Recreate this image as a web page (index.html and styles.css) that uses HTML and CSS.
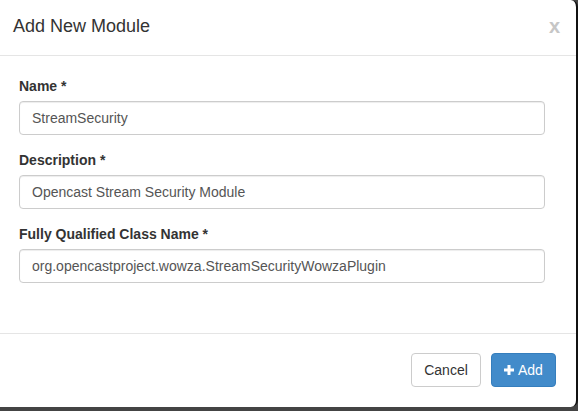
FILE: index.html
```html
<!DOCTYPE html>
<html>
<head>
<meta charset="utf-8">
<link rel="stylesheet" href="styles.css">
</head>
<body>
<div class="modal">
  <div class="modal-header">
    <h4 class="modal-title">Add New Module</h4>
    <span class="close">x</span>
  </div>
  <div class="modal-body">
    <div class="form-group">
      <label class="label">Name *</label>
      <input class="input" type="text" value="StreamSecurity">
    </div>
    <div class="form-group">
      <label class="label">Description *</label>
      <input class="input" type="text" value="Opencast Stream Security Module">
    </div>
    <div class="form-group">
      <label class="label">Fully Qualified Class Name *</label>
      <input class="input" type="text" value="org.opencastproject.wowza.StreamSecurityWowzaPlugin">
    </div>
  </div>
  <div class="modal-footer">
    <button class="btn btn-default">Cancel</button>
    <button class="btn btn-primary"><svg class="plus" width="10" height="10" viewBox="0 0 10 10"><rect x="3.5" y="0" width="3" height="10" fill="#fff"/><rect x="0" y="3.5" width="10" height="3" fill="#fff"/></svg>Add</button>
  </div>
</div>
</body>
</html>
```
FILE: styles.css
```css
* { box-sizing: border-box; }
html, body { margin: 0; padding: 0; }
body {
  width: 578px;
  height: 411px;
  background: #444;
  font-family: "Liberation Sans", Arial, sans-serif;
  font-size: 14px;
  line-height: 20px;
  color: #333;
  overflow: hidden;
}
.modal {
  width: 578px;
  height: 407px;
  background: #fff;
  border-right: 2px solid #111;
  border-radius: 0 7px 7px 0;
  display: flex;
  flex-direction: column;
}
.modal-header {
  height: 56px;
  padding: 13px 15px 0 13px;
  border-bottom: 1px solid #e5e5e5;
  display: flex;
  justify-content: space-between;
  align-items: flex-start;
}
.modal-title {
  margin: 0;
  font-size: 18px;
  font-weight: normal;
  line-height: 26px;
  color: #333;
}
.close {
  font-size: 20px;
  font-weight: bold;
  color: #c6c6c6;
  line-height: 26px;
  margin-right: 1px;
}
.modal-body {
  padding: 20px 31px 0 19px;
  height: 278px;
  border-bottom: 1px solid #e5e5e5;
}
.form-group {
  margin-bottom: 15px;
  display: flex;
  flex-direction: column;
}
.label {
  font-weight: bold;
  margin-bottom: 5px;
  line-height: 20px;
}
.input {
  width: 526px;
  height: 34px;
  padding: 6px 12px;
  border: 1px solid #ccc;
  border-radius: 4px;
  font-family: "Liberation Sans", Arial, sans-serif;
  font-size: 14px;
  color: #555;
  box-shadow: inset 0 1px 1px rgba(0,0,0,.075);
  outline: none;
}
.modal-footer {
  display: flex;
  justify-content: flex-end;
  gap: 10px;
  padding: 19px 20px 0 0;
}
.btn {
  height: 34px;
  padding: 6px 12px;
  border-radius: 4px;
  font-family: "Liberation Sans", Arial, sans-serif;
  font-size: 14px;
  line-height: 20px;
  display: flex;
  align-items: center;
}
.btn-default {
  background: #fff;
  border: 1px solid #ccc;
  color: #333;
  width: 70px;
  justify-content: center;
}
.btn-primary {
  background: #428bca;
  border: 1px solid #357ebd;
  color: #fff;
  width: 65px;
  padding: 6px 0 6px 12px;
}
.plus { margin-right: 4px; }
```
